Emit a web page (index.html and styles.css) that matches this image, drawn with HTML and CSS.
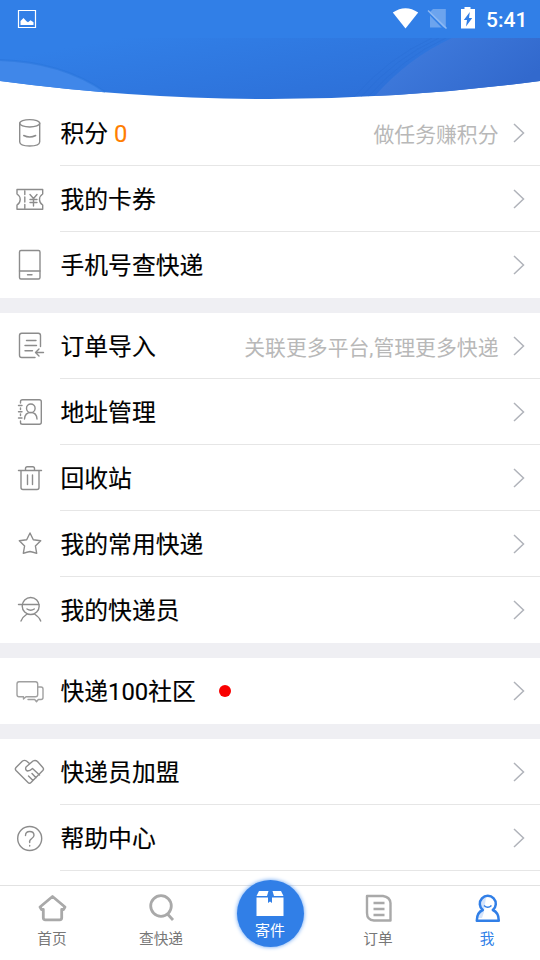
FILE: index.html
```html
<!DOCTYPE html>
<html lang="zh-CN">
<head>
<meta charset="utf-8">
<title>我</title>
<link rel="stylesheet" href="styles.css">
</head>
<body>
<div class="app">
  <header class="header">
    <svg class="header-bg" viewBox="0 0 540 100" width="540" height="100">
      <defs>
        <linearGradient id="sky" x1="0" y1="0" x2="1" y2="1">
          <stop offset="0.3" stop-color="#317fe7"/>
          <stop offset="1" stop-color="#2c6bd3"/>
        </linearGradient>
        <linearGradient id="hill" x1="0" y1="0" x2="1" y2="0.5">
          <stop offset="0" stop-color="#427fe0"/>
          <stop offset="1" stop-color="#3269cd"/>
        </linearGradient>
        <clipPath id="arc"><path d="M0 0H540V81Q405 99 270 99T0 81Z"/></clipPath>
      </defs>
      <g clip-path="url(#arc)">
        <rect width="540" height="100" fill="url(#sky)"/>
        <path d="M0 60Q62 62 105 92V100H0Z" fill="#4087e9"/>
        <path d="M0 60Q62 62 105 92" fill="none" stroke="#2873da" stroke-width="2" opacity=".5"/>
        <path d="M374 97Q408 58 452 38H540V100H374Z" fill="url(#hill)"/>
        <g fill="none" stroke="#286bd2" opacity=".3"><path d="M368 97Q402 58 446 38M361 97Q395 58 439 38M354 97Q388 58 432 38"/></g>
        <rect width="540" height="38" fill="#317fe7"/>
      </g>
    </svg>
    <div class="status">
      <svg class="status-pic" viewBox="0 0 20 20" width="20" height="20"><path d="M1.500 1.500h17v17h-17z" fill="none" stroke="#fff" stroke-width="1.200"/><path d="M3.500 16v-4l3-3 3 3.200 1.500 1 2.500-2 3 2V16z" fill="#fff"/></svg>
      <div class="status-right">
        <svg viewBox="0 0 96 28" width="96" height="29">
          <path d="M1.800 12Q14.500 3.500 27.200 12L14.500 28Z" fill="#fff"/>
          <path d="M42 8.500h12.800V27H39V11.500z" fill="#6ca4ee"/><path d="M36.500 11.500L54 29.500" stroke="#317fe7" stroke-width="1.500"/><path d="M37 10L55.500 28" stroke="#8db9f3" stroke-width="1.500"/>
          <path d="M70 8.500h3.500V6.500h6v2H84V28H70z" fill="#fff"/><path d="M78.800 11.500L72.800 19.500h3.200l-1 6.500 6.200-8.500h-3.200z" fill="#317fe7"/>
        </svg>
        <span class="clock">5:41</span>
      </div>
    </div>
  </header>

  <main class="menu">
    <section class="group">
      <a class="row"><svg class="icon" viewBox="0 0 60 66"><ellipse cx="29.700" cy="23.300" rx="10" ry="3.700"/><path d="M19.700 23.300V42Q20 46 29.700 46T39.700 42V23.300M23.700 35.500Q29.700 38.500 35.700 35.500"/></svg>
        <div class="body"><span class="label">积分 <b class="points">0</b></span><span class="hint">做任务赚积分</span><svg class="chevron" viewBox="0 0 12 20"><path d="M1 1l9.500 9L1 19"/></svg></div></a>
      <a class="row"><svg class="icon" viewBox="0 0 60 66"><path d="M17 23.500H42.700V28Q39.500 30 39.500 33.500T42.700 39V43.300H17V39Q20.200 37 20.200 33.500T17 28ZM24.800 25v3.500M24.800 31v5M24.800 38.500v3.500M30 28.500l3.500 4 3.500-4M33.500 33.500V40M30 33.500h7M30 36.500h7"/></svg>
        <div class="body"><span class="label">我的卡券</span><svg class="chevron" viewBox="0 0 12 20"><path d="M1 1l9.500 9L1 19"/></svg></div></a>
      <a class="row"><svg class="icon" viewBox="0 0 60 66"><rect x="19.500" y="18.500" width="20.500" height="28.500" rx="1.500"/><path d="M19.500 39h20.500M27.500 42.700h4.500"/></svg>
        <div class="body"><span class="label">手机号查快递</span><svg class="chevron" viewBox="0 0 12 20"><path d="M1 1l9.500 9L1 19"/></svg></div></a>
    </section>
    <section class="group">
      <a class="row"><svg class="icon" viewBox="0 0 60 66"><path d="M40.500 33.500V22.500Q40.500 20.200 38.300 20.200H21.700Q19.500 20.200 19.500 22.500V42.300Q19.500 44.500 21.700 44.500H35M26.500 27.500h9.500M25 32.500h11.500M25 37.700h7.500M43.500 39.500H36M39 36l-3.500 3.500L39 43"/></svg>
        <div class="body"><span class="label">订单导入</span><span class="hint">关联更多平台,管理更多快递</span><svg class="chevron" viewBox="0 0 12 20"><path d="M1 1l9.500 9L1 19"/></svg></div></a>
      <a class="row"><svg class="icon" viewBox="0 0 60 66"><path d="M20.500 24V22.500Q20.500 20.700 22.500 20.700H39.300Q41.300 20.700 41.300 22.700V43.300Q41.300 45.300 39.300 45.300H22.500Q20.500 45.300 20.500 43.500V42M20.500 29v1.500M20.500 35v1.500M18.500 26.500h3.500M18.500 32.700h3.500M18.500 39h3.500M24.500 40Q25 33.500 30.800 33.500T37 40"/><circle cx="30.800" cy="29.300" r="4.300"/></svg>
        <div class="body"><span class="label">地址管理</span><svg class="chevron" viewBox="0 0 12 20"><path d="M1 1l9.500 9L1 19"/></svg></div></a>
      <a class="row"><svg class="icon" viewBox="0 0 60 66"><path d="M18.500 25.500h23M21 25.500V42.500Q21 44.500 23 44.500H37Q39 44.500 39 42.500V25.500M25.500 25.500V23.500Q25.500 21.700 27.300 21.700H32.700Q34.500 21.700 34.500 23.500V25.500M27.500 30v9.500M32.500 30v9.500"/></svg>
        <div class="body"><span class="label">回收站</span><svg class="chevron" viewBox="0 0 12 20"><path d="M1 1l9.500 9L1 19"/></svg></div></a>
      <a class="row"><svg class="icon" viewBox="0 0 60 66"><path d="M30 22L33.300 28.700 40.700 29.800 35.400 35 36.700 42.300Q33 41 30 40.500 27 41 23.300 42.300L24.600 35 19.300 29.800 26.700 28.700Z"/></svg>
        <div class="body"><span class="label">我的常用快递</span><svg class="chevron" viewBox="0 0 12 20"><path d="M1 1l9.500 9L1 19"/></svg></div></a>
      <a class="row"><svg class="icon" viewBox="0 0 60 66"><circle cx="30.700" cy="29" r="8.500"/><path d="M18.500 27.500H39M27 32Q30.700 34.500 34.300 32M21 44Q22.500 40 27 37M40.700 44Q39.200 40 34.500 37"/></svg>
        <div class="body"><span class="label">我的快递员</span><svg class="chevron" viewBox="0 0 12 20"><path d="M1 1l9.500 9L1 19"/></svg></div></a>
    </section>
    <section class="group">
      <a class="row"><svg class="icon light" viewBox="0 0 60 66"><path d="M19 23.700H35.500Q37.700 23.700 37.700 26V36.500Q37.700 38.700 35.500 38.700H26L23.500 41V38.700H19Q17 38.700 17 36.500V26Q17 23.700 19 23.700ZM37.700 29H41Q43 29 43 31V39.500Q43 41.500 41 41.500H38.300L36.500 43.700 34.700 41.500H28"/></svg>
        <div class="body"><span class="label">快递100社区</span><i class="dot"></i><svg class="chevron" viewBox="0 0 12 20"><path d="M1 1l9.500 9L1 19"/></svg></div></a>
    </section>
    <section class="group">
      <a class="row"><svg class="icon" viewBox="0 0 60 66"><path d="M29.500 24.500L26.500 22Q24.500 20.700 22.500 22L16 28.500Q14.700 30 16 31.500L28 43.500Q29.500 45 31 43.500L42.800 31.500Q44.200 30 42.800 28.500L37.500 22.500Q35.500 20.700 33 22L26 28Q24.800 31 27.500 32Q30 32 32.500 29.500L39.500 36M28.500 37l4.500 4.500M32 34.500L36 38.800"/></svg>
        <div class="body"><span class="label">快递员加盟</span><svg class="chevron" viewBox="0 0 12 20"><path d="M1 1l9.500 9L1 19"/></svg></div></a>
      <a class="row"><svg class="icon" viewBox="0 0 60 66"><circle cx="29.700" cy="33.500" r="12"/><path d="M25.500 30.500Q25.500 26.500 29.700 26.500T34 30.300Q34 32 31.500 33.800T29.700 37.500M29.700 40.500v.5"/></svg>
        <div class="body"><span class="label">帮助中心</span><svg class="chevron" viewBox="0 0 12 20"><path d="M1 1l9.500 9L1 19"/></svg></div></a>
    </section>
  </main>

  <nav class="tabs">
    <a class="tab home"><svg viewBox="0 0 30 30"><path d="M15.500 2.500L28 13 26.500 15.500H24.700V23.800Q24.700 25.800 22.700 25.800H8.300Q6.300 25.800 6.300 23.800V15.500H4.500L3 13Z"/></svg><span>首页</span></a>
    <a class="tab search"><svg viewBox="0 0 30 30"><circle cx="15" cy="12" r="10.300"/><path d="M21.500 20l5.500 6"/></svg><span>查快递</span></a>
    <a class="send"><svg viewBox="0 0 30 28"><path d="M4 2h9.500L12 7H1.500zM17.500 2H26l2.500 5h-9.500zM1.500 8.500h11.500v5.500l2-1.500 2 1.500V8.500h11.500V27H1.500z" fill="#fff"/></svg><span>寄件</span></a>
    <a class="tab order"><svg viewBox="0 0 30 30"><path d="M4 2H20Q27 3 27.500 9V26.500H11Q4 26 4 19ZM10.500 9h11M10.500 15h11M10.500 21h11"/></svg><span>订单</span></a>
    <a class="tab me"><svg viewBox="0 0 30 30"><path d="M10 15.500Q6 12 7.500 7Q9 3 14 3L12 18 10 24H5Q4 19 10 15.500Z" fill="#d5e4fb" stroke="none"/><path d="M10.800 16A8 8 0 1 1 20.800 16Q26.800 18.500 26.800 26.700H4.800Q4.800 18.500 10.800 16Z"/><path class="smile" d="M12 11.500Q15.800 15 19.500 11.500"/></svg><span>我</span></a>
  </nav>
</div>
</body>
</html>
```
FILE: styles.css
```css
* { box-sizing: border-box; }
body {
  margin: 0;
  font-family: Roboto, "Noto Sans CJK SC", sans-serif;
  color: #000;
  background: #fff;
}
.app {
  width: 540px;
  height: 960px;
  display: flex;
  flex-direction: column;
  overflow: hidden;
}
.header { position: relative; height: 100px; flex: none; }
.header-bg { position: absolute; left: 0; top: 0; }
.status {
  position: relative;
  height: 38px;
  display: flex;
  justify-content: space-between;
  align-items: flex-start;
  padding: 0 13px 0 17px;
}
.status-pic { margin-top: 9px; }
.status-right { display: flex; }
.clock {
  width: 41px;
  margin-left: -1px;
  color: #fff;
  font-size: 21px;
  font-weight: 500;
  line-height: 41px;
  white-space: nowrap;
}
.menu {
  flex: 1;
  min-height: 0;
  overflow: hidden;
  display: flex;
  flex-direction: column;
  gap: 15px;
  background: #efeff3;
}
.group { background: #fff; flex: none; }
.group:last-child { flex: 1 0 auto; }
.row { display: flex; height: 66px; }
.icon {
  width: 60px;
  height: 66px;
  flex: none;
  fill: none;
  stroke: #8c8c8c;
  stroke-width: 1.400;
  stroke-linejoin: round;
  stroke-linecap: round;
}
.icon.light { stroke: #a0a0a0; }
.body {
  flex: 1;
  display: flex;
  align-items: center;
  padding-right: 15px;
  border-bottom: 1px solid #e6e6e6;
}
.row:last-child .body { border-bottom-color: transparent; }
.group:last-child .row:last-child .body { border-bottom-color: #e6e6e6; }
.label {
  padding: 2px 0 0 0.500px;
  font-size: 23.800px;
  line-height: 34px;
  white-space: nowrap;
  -webkit-text-stroke: 0.150px #000;
}
.points { color: #ff7e00; font-weight: 400; -webkit-text-stroke: 0.150px #ff7e00; }
.hint {
  margin-left: auto;
  margin-right: 2.500px;
  font-size: 20.850px;
  color: #b8b8b8;
  white-space: nowrap;
}
.chevron {
  width: 12px;
  height: 20px;
  margin-left: auto;
  fill: none;
  stroke: #b0b3ba;
  stroke-width: 1.500;
}
.hint + .chevron { margin-left: 12px; }
.dot { width: 12px; height: 12px; margin-left: 23.500px; border-radius: 50%; background: #f90000; }
.tabs {
  position: relative;
  height: 75px;
  flex: none;
  display: grid;
  grid-template-columns: 104px 114px 104px 112px 106px;
  border-top: 1px solid #e2e2e2;
  background: #fff;
}
.tab {
  display: flex;
  flex-direction: column;
  align-items: center;
  padding-top: 8px;
  font-size: 14.700px;
  line-height: 20px;
  color: #777;
}
.tab svg { width: 30px; height: 30px; margin-bottom: 5px; fill: none; stroke: #a9a9a9; stroke-width: 2.800; stroke-linejoin: round; }
.order svg path { stroke-width: 2.400; }
.me { color: #317fe7; }
.me svg { stroke: #317fe7; stroke-width: 2.500; }
.me .smile { stroke-width: 1.500; }
.send {
  justify-self: center;
  width: 67px;
  height: 67px;
  margin-top: -6px;
  padding-top: 9px;
  display: flex;
  flex-direction: column;
  align-items: center;
  border-radius: 50%;
  background: #317fe7;
  box-shadow: 0 0 4px #5b9cf3;
  color: #fff;
  font-size: 15px;
  line-height: 20px;
}
.send svg { width: 30px; height: 28px; margin-bottom: 4px; }
```
